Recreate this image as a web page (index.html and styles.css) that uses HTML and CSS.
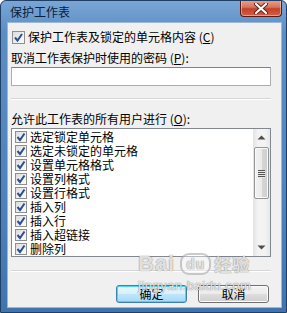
FILE: index.html
```html
<!DOCTYPE html>
<html>
<head>
<meta charset="utf-8">
<link rel="stylesheet" href="styles.css">
</head>
<body>
<div class="window">
  <div class="titlebar">
    <span class="title">保护工作表</span>
    <div class="close">
      <svg width="20" height="11" viewBox="0 0 20 11"><path d="M5 1 L15 10 M15 1 L5 10" stroke="#5a2020" stroke-width="4" stroke-linecap="round"/><path d="M5 1 L15 10 M15 1 L5 10" stroke="#ffffff" stroke-width="2.2" stroke-linecap="round"/></svg>
    </div>
  </div>
  <div class="client">
    <div class="check-row main">
      <span class="cb big"><svg viewBox="0 0 13 13" width="13" height="13"><path d="M3 6.5 L5.5 9.5 L10 3" fill="none" stroke="#2b4f8f" stroke-width="2"/></svg></span>
      <span>保护工作表及锁定的单元格内容 (<u>C</u>)</span>
    </div>
    <div class="label label-p">取消工作表保护时使用的密码 (<u>P</u>):</div>
    <div class="input"></div>
    <div class="sep sep1"></div>
    <div class="label label-o">允许此工作表的所有用户进行 (<u>O</u>):</div>
    <div class="listbox">
      <div class="items">
        <div class="item"><span class="cb"><svg viewBox="0 0 12 12" width="12" height="12"><path d="M2.5 6 L5 9 L9.5 2.5" fill="none" stroke="#2b4f8f" stroke-width="2"/></svg></span>选定锁定单元格</div>
        <div class="item"><span class="cb"><svg viewBox="0 0 12 12" width="12" height="12"><path d="M2.5 6 L5 9 L9.5 2.5" fill="none" stroke="#2b4f8f" stroke-width="2"/></svg></span>选定未锁定的单元格</div>
        <div class="item"><span class="cb"><svg viewBox="0 0 12 12" width="12" height="12"><path d="M2.5 6 L5 9 L9.5 2.5" fill="none" stroke="#2b4f8f" stroke-width="2"/></svg></span>设置单元格格式</div>
        <div class="item"><span class="cb"><svg viewBox="0 0 12 12" width="12" height="12"><path d="M2.5 6 L5 9 L9.5 2.5" fill="none" stroke="#2b4f8f" stroke-width="2"/></svg></span>设置列格式</div>
        <div class="item"><span class="cb"><svg viewBox="0 0 12 12" width="12" height="12"><path d="M2.5 6 L5 9 L9.5 2.5" fill="none" stroke="#2b4f8f" stroke-width="2"/></svg></span>设置行格式</div>
        <div class="item"><span class="cb"><svg viewBox="0 0 12 12" width="12" height="12"><path d="M2.5 6 L5 9 L9.5 2.5" fill="none" stroke="#2b4f8f" stroke-width="2"/></svg></span>插入列</div>
        <div class="item"><span class="cb"><svg viewBox="0 0 12 12" width="12" height="12"><path d="M2.5 6 L5 9 L9.5 2.5" fill="none" stroke="#2b4f8f" stroke-width="2"/></svg></span>插入行</div>
        <div class="item"><span class="cb"><svg viewBox="0 0 12 12" width="12" height="12"><path d="M2.5 6 L5 9 L9.5 2.5" fill="none" stroke="#2b4f8f" stroke-width="2"/></svg></span>插入超链接</div>
        <div class="item"><span class="cb"><svg viewBox="0 0 12 12" width="12" height="12"><path d="M2.5 6 L5 9 L9.5 2.5" fill="none" stroke="#2b4f8f" stroke-width="2"/></svg></span>删除列</div>
      </div>
      <div class="scrollbar">
        <div class="arrow"><svg width="9" height="5" viewBox="0 0 9 5"><path d="M0.5 4.5 L4.5 0.5 L8.5 4.5 Z" fill="#4d4d4d"/></svg></div>
        <div class="track">
          <div class="thumb"><span class="grip"></span><span class="grip"></span><span class="grip"></span><span class="grip"></span></div>
        </div>
        <div class="arrow"><svg width="9" height="5" viewBox="0 0 9 5"><path d="M0.5 0.5 L4.5 4.5 L8.5 0.5 Z" fill="#4d4d4d"/></svg></div>
      </div>
    </div>
    <div class="sep sep2"></div>
    <div class="buttons">
      <div class="btn default">确定</div>
      <div class="btn">取消</div>
    </div>
  </div>
  <div class="watermark">
    <div class="wm-logo"><span>Bai</span><span class="wm-paw">du</span><span class="wm-cn">经验</span></div>
    <div class="wm-url">jingyan.baidu.com</div>
  </div>
</div>
</body>
</html>
```
FILE: styles.css
```css
* { box-sizing: border-box; }
html, body { margin: 0; padding: 0; }
body {
  font-family: "Noto Sans CJK SC", "Liberation Sans", sans-serif;
  font-size: 12px;
  color: #000;
  background: #fff;
}
.window {
  position: relative;
  width: 287px;
  height: 313px;
  background: linear-gradient(180deg, #7aa6d4 0%, #5b8ec4 10%, #4f84bc 60%, #3f74ad 100%);
  border: 1px solid #1f3f66;
  border-radius: 6px 6px 0 0;
  display: flex;
  flex-direction: column;
  overflow: hidden;
}
.titlebar {
  height: 21px;
  display: flex;
  justify-content: space-between;
  align-items: flex-start;
  flex-shrink: 0;
}
.title {
  padding-left: 9px;
  line-height: 22px;
  font-size: 12px;
  color: #0a2038;
}
.close {
  width: 42px;
  height: 17px;
  margin-right: 4px;
  margin-top: -1px;
  border: 1px solid #5a1a12;
  border-top: none;
  border-radius: 0 0 4px 4px;
  background: linear-gradient(180deg, #e9a38e 0%, #d9735a 45%, #c2412a 55%, #d0604a 100%);
  box-shadow: inset 0 0 0 1px rgba(255,220,200,0.5);
  display: flex;
  align-items: center;
  justify-content: center;
}
.close svg { display: block; }
.client {
  margin: 0 4px 4px 6px;
  flex: 1;
  background: #f0f0f0;
  border: 1px solid #9cb6d3;
  padding: 7px 0 0 3px;
  display: flex;
  flex-direction: column;
}
.check-row {
  display: flex;
  align-items: center;
  height: 14px;
  line-height: 14px;
}
.check-row.main { margin-left: 1px; gap: 3px; }
.cb {
  flex-shrink: 0;
  width: 12px;
  height: 12px;
  border: 1px solid #8e8f8f;
  background: linear-gradient(135deg, #dcdcdc 0%, #f7f7f7 80%);
  position: relative;
  display: block;
}
.cb.big { width: 13px; height: 13px; }
.cb svg { position: absolute; left: -1px; top: -1px; }
.label {
  height: 14px;
  line-height: 14px;
  white-space: nowrap;
}
.label-p { margin-top: 7px; }
.input {
  margin-top: 2px;
  width: 260px;
  height: 19px;
  background: #fff;
  border: 1px solid #abadb3;
  border-top-color: #7b8290;
}
.sep {
  width: 260px;
  height: 2px;
  border-top: 1px solid #d5d5d5;
  border-bottom: 1px solid #ffffff;
}
.sep1 { margin-top: 12px; }
.label-o { margin-top: 12px; }
.listbox {
  margin-top: 2px;
  width: 260px;
  height: 129px;
  background: #fff;
  border: 1px solid #828790;
  display: flex;
}
.items {
  flex: 1;
  padding-top: 1px;
}
.item {
  height: 14px;
  line-height: 14px;
  display: flex;
  align-items: center;
  gap: 3px;
  padding-left: 3px;
  white-space: nowrap;
}
.scrollbar {
  width: 17px;
  display: flex;
  flex-direction: column;
  background: linear-gradient(90deg, #e3e3e3 0%, #f3f3f3 30%, #f3f3f3 70%, #e8e8e8 100%);
}
.arrow {
  height: 17px;
  display: flex;
  align-items: center;
  justify-content: center;
  flex-shrink: 0;
}
.track { flex: 1; padding-top: 1px; }
.thumb {
  margin: 0 1px;
  height: 52px;
  border: 1px solid #959595;
  border-radius: 2px;
  background: linear-gradient(90deg, #f2f2f2 0%, #ebebeb 50%, #d6d6d6 51%, #cfcfcf 100%);
  box-shadow: inset 0 0 0 1px #fafafa;
  display: flex;
  flex-direction: column;
  align-items: center;
  justify-content: center;
  gap: 1px;
}
.grip {
  width: 7px;
  height: 1px;
  background: #555;
  box-shadow: 0 1px 0 #e8e8e8;
}
.sep2 { margin-top: 13px; }
.buttons {
  margin-top: 13px;
  width: 260px;
  display: flex;
  justify-content: flex-end;
  gap: 11px;
  padding-right: 2px;
}
.btn {
  width: 71px;
  height: 18px;
  border: 1px solid #707070;
  border-radius: 3px;
  background: linear-gradient(180deg, #f2f2f2 0%, #ebebeb 50%, #dddddd 51%, #cfcfcf 100%);
  box-shadow: inset 0 0 0 1px #fcfcfc;
  text-align: center;
  line-height: 16px;
}
.btn.default {
  border-color: #3c7fb1;
  box-shadow: inset 0 0 0 1px #48d8fb;
  background: linear-gradient(180deg, #eaf6fd 0%, #d9f0fc 50%, #bee6fd 51%, #a7d9f5 100%);
}
.watermark {
  position: absolute;
  left: 137px;
  top: 251px;
  color: rgba(255,255,255,0.8);
  text-shadow: 0 0 1px rgba(90,90,90,0.7), 0 0 1px rgba(90,90,90,0.5);
  pointer-events: none;
}
.wm-logo {
  display: flex;
  align-items: center;
  font-family: "Liberation Sans", sans-serif;
  font-weight: bold;
  font-size: 22px;
  line-height: 24px;
  letter-spacing: 1px;
}
.wm-paw {
  margin: 0 3px 0 5px;
  font-size: 14px;
  line-height: 16px;
  border-radius: 9px;
  padding: 1px 4px;
  border: 2px solid rgba(140,140,140,0.45);
  background: rgba(255,255,255,0.4);
}
.wm-cn {
  font-family: "Noto Sans CJK SC", sans-serif;
  font-size: 17px;
}
.wm-url {
  font-family: "Liberation Sans", sans-serif;
  font-size: 13px;
  line-height: 14px;
  margin-top: 3px;
  letter-spacing: 0.5px;
}
```
